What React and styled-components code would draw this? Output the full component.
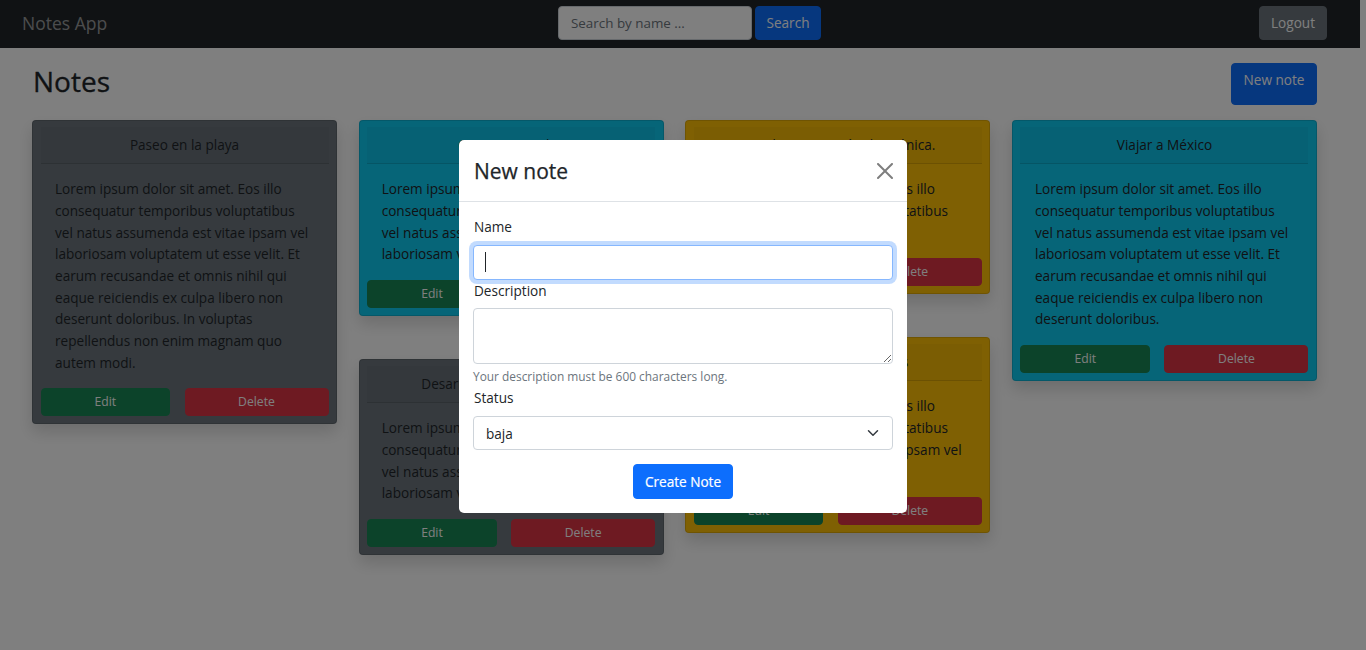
import React from 'react'
import styled, { createGlobalStyle } from 'styled-components'

const FONT = `"Open Sans", "Noto Sans", sans-serif`

const GlobalStyle = createGlobalStyle`
  html, body {
    margin: 0;
    height: 100%;
    overflow: hidden;
    background: #fff;
  }
  * { box-sizing: border-box; }
  body {
    font-family: ${FONT};
    font-size: 13.6px;
    color: #212529;
  }
`

const LOREM = [
  'Lorem ipsum dolor sit amet. Eos illo',
  'consequatur temporibus voluptatibus',
  'vel natus assumenda est vitae ipsam vel',
  'laboriosam voluptatem ut esse velit. Et',
  'earum recusandae et omnis nihil qui',
  'eaque reiciendis ex culpa libero non',
  'deserunt doloribus. In voluptas',
  'repellendus non enim magnam quo',
  'autem modi.',
]

const COLUMNS = [
  [{ title: 'Paseo en la playa', tone: 'secondary', lines: LOREM }],
  [
    { title: 'Comprar regalos', tone: 'info', lines: [...LOREM.slice(0, 3), 'laboriosam voluptatem ut esse velit.'] },
    { title: 'Desarrollar nueva aplicación', tone: 'secondary', lines: [...LOREM.slice(0, 3), 'laboriosam voluptatem ut esse velit.'] },
  ],
  [
    { title: 'Estudiar ingeniería electrónica.', tone: 'warning', lines: [...LOREM.slice(0, 2), 'vel natus assumenda'] },
    { title: 'Practicar matemáticas', tone: 'warning', lines: [...LOREM.slice(0, 3), 'laboriosam'] },
  ],
  [{ title: 'Viajar a México', tone: 'info', lines: [...LOREM.slice(0, 6), 'deserunt doloribus.'] }],
]

const TONES = {
  secondary: '#6c757d',
  info: '#0dcaf0',
  warning: '#ffc107',
}

const Page = styled.div`
  width: 1360px;
`

const Navbar = styled.nav`
  height: 48px;
  background: #212529;
  display: grid;
  grid-template-columns: 536px auto 1fr;
  align-items: center;
  padding: 0 33px 2px 22px;
`

const Brand = styled.a`
  font-size: 17.5px;
  color: rgba(255, 255, 255, 0.55);
`

const SearchForm = styled.form`
  display: flex;
  gap: 3px;
`

const SearchInput = styled.input`
  width: 194px;
  height: 34px;
  padding: 0 12px;
  border: 1px solid #ced4da;
  border-radius: 4px;
  background: #fff;
  font: 13.4px ${FONT};
  &::placeholder { color: #6c757d; opacity: 1; }
`

const Button = styled.button`
  font-family: ${FONT};
  font-size: 13.6px;
  line-height: 22px;
  color: #fff;
  border: 1px solid ${p => p.$bg};
  border-radius: 4px;
  background: ${p => p.$bg};
  padding: 5px 11px;
`

const SearchButton = styled(Button)`
  width: 66px;
  padding: 5px 0;
`

const LogoutWrap = styled.div`
  display: flex;
  justify-content: flex-end;
`

const Main = styled.main`
  padding: 15px 43px 0 32px;
`

const PageHead = styled.div`
  display: flex;
  justify-content: space-between;
  align-items: flex-start;
  margin-bottom: 15px;
`

const PageTitle = styled.h1`
  margin: 0 0 0 1px;
  font-size: 28px;
  font-weight: 500;
  line-height: 36px;
  -webkit-text-stroke: 0.3px #212529;
`

const NewNoteButton = styled(Button)`
  width: 86px;
  height: 42px;
  padding: 5px 0 13px;
`

const Columns = styled.div`
  display: grid;
  grid-template-columns: repeat(4, 305px);
  column-gap: 21.67px;
  align-items: start;
`

const Column = styled.div`
  display: flex;
  flex-direction: column;
  gap: 43.3px;
`

const Card = styled.article`
  background: ${p => TONES[p.$tone]};
  border: 1px solid rgba(0, 0, 0, 0.125);
  border-radius: 4px;
  box-shadow: 0 8px 16px rgba(0, 0, 0, 0.15);
  padding: 6px 7.5px 7px;
`

const CardHeader = styled.header`
  height: 37px;
  line-height: 36px;
  text-align: center;
  background: rgba(0, 0, 0, 0.03);
  border-bottom: 1px solid rgba(0, 0, 0, 0.125);
  white-space: nowrap;
`

const CardText = styled.div`
  padding: 14.2px 14.5px 14.8px;
`

const TextLine = styled.span`
  display: block;
  line-height: 21.67px;
  white-space: nowrap;
`

const CardActions = styled.div`
  display: grid;
  grid-template-columns: 45% 50%;
  justify-content: space-between;
`

const ActionButton = styled(Button)`
  height: 28px;
  padding: 0;
  font-size: 12.2px;
  line-height: 26px;
`

const Backdrop = styled.div`
  position: fixed;
  inset: 0;
  background: rgba(0, 0, 0, 0.5);
  display: flex;
  justify-content: center;
  align-items: flex-start;
  padding-top: 140px;
`

const Modal = styled.div`
  width: 448px;
  background: #fff;
  border-radius: 5px;
`

const ModalHeader = styled.div`
  height: 62px;
  display: flex;
  align-items: center;
  justify-content: space-between;
  padding: 0 14px 0 15px;
  border-bottom: 1px solid #dee2e6;
`

const ModalTitle = styled.h2`
  margin: 0;
  font-size: 21px;
  font-weight: 500;
  -webkit-text-stroke: 0.25px #212529;
`

const CloseButton = styled.button`
  width: 16px;
  height: 16px;
  padding: 0;
  border: 0;
  background: none;
  color: #000;
  opacity: 0.5;
  display: flex;
`

const ModalBody = styled.form`
  padding: 14px;
`

const Label = styled.label`
  display: block;
  line-height: 21.67px;
  margin: 0 0 7px 1px;
`

const FieldWrap = styled.div`
  position: relative;
`

const TextInput = styled.input`
  display: block;
  width: 100%;
  height: 35px;
  padding: 0 12px;
  border: 1px solid #86b7fe;
  border-radius: 4px;
  box-shadow: 0 0 0 4px rgba(13, 110, 253, 0.25);
  outline: 0;
  font: 13.6px ${FONT};
`

const Caret = styled.span`
  position: absolute;
  left: 12px;
  top: 7px;
  width: 1px;
  height: 20px;
  background: #212529;
`

const TextArea = styled.textarea`
  display: block;
  width: 100%;
  height: 56px;
  padding: 6px 12px;
  border: 1px solid #ced4da;
  border-radius: 4px;
  resize: vertical;
  font: 13.6px ${FONT};
`

const HelpText = styled.div`
  margin-top: 2px;
  height: 21px;
  line-height: 21px;
  font-size: 11.9px;
  color: #6c757d;
`

const Select = styled.select`
  display: block;
  width: 100%;
  height: 34px;
  padding: 0 12px;
  border: 1px solid #ced4da;
  border-radius: 4px;
  background: #fff;
  appearance: none;
  font: 13.6px ${FONT};
  color: #212529;
`

const Chevron = styled.svg`
  position: absolute;
  right: 12px;
  top: 11px;
  width: 16px;
  height: 12px;
  pointer-events: none;
`

const SubmitRow = styled.div`
  display: flex;
  justify-content: center;
  margin-top: 14px;
`

const SubmitButton = styled(Button)`
  width: 100px;
  height: 35px;
  padding: 0;
  font-weight: 500;
  -webkit-text-stroke: 0.2px #fff;
`

function NoteCard({ note }) {
  return (
    <Card $tone={note.tone}>
      <CardHeader>{note.title}</CardHeader>
      <CardText>
        {note.lines.map((line, i) => <TextLine key={i}>{line}</TextLine>)}
      </CardText>
      <CardActions>
        <ActionButton $bg="#198754">Edit</ActionButton>
        <ActionButton $bg="#dc3545">Delete</ActionButton>
      </CardActions>
    </Card>
  )
}

export default function App() {
  return (
    <>
      <GlobalStyle />
      <Page>
        <Navbar>
          <Brand>Notes App</Brand>
          <SearchForm>
            <SearchInput placeholder="Search by name ..." />
            <SearchButton $bg="#0d6efd" type="button">Search</SearchButton>
          </SearchForm>
          <LogoutWrap>
            <Button $bg="#6c757d" type="button">Logout</Button>
          </LogoutWrap>
        </Navbar>
        <Main>
          <PageHead>
            <PageTitle>Notes</PageTitle>
            <NewNoteButton $bg="#0d6efd" type="button">New note</NewNoteButton>
          </PageHead>
          <Columns>
            {COLUMNS.map((notes, i) => (
              <Column key={i}>
                {notes.map(note => <NoteCard key={note.title} note={note} />)}
              </Column>
            ))}
          </Columns>
        </Main>
      </Page>
      <Backdrop>
        <Modal>
          <ModalHeader>
            <ModalTitle>New note</ModalTitle>
            <CloseButton type="button" aria-label="Close">
              <svg viewBox="0 0 16 16" width="16" height="16" fill="currentColor">
                <path d="M.293.293a1 1 0 011.414 0L8 6.586 14.293.293a1 1 0 111.414 1.414L9.414 8l6.293 6.293a1 1 0 01-1.414 1.414L8 9.414l-6.293 6.293a1 1 0 01-1.414-1.414L6.586 8 .293 1.707a1 1 0 010-1.414z" />
              </svg>
            </CloseButton>
          </ModalHeader>
          <ModalBody>
            <Label>Name</Label>
            <FieldWrap>
              <TextInput />
              <Caret />
            </FieldWrap>
            <Label>Description</Label>
            <TextArea />
            <HelpText>Your description must be 600 characters long.</HelpText>
            <Label>Status</Label>
            <FieldWrap>
              <Select defaultValue="baja">
                <option value="baja">baja</option>
                <option value="media">media</option>
                <option value="alta">alta</option>
              </Select>
              <Chevron viewBox="0 0 16 16">
                <path fill="none" stroke="#343a40" strokeLinecap="round" strokeLinejoin="round" strokeWidth="2" d="M2 5l6 6 6-6" />
              </Chevron>
            </FieldWrap>
            <SubmitRow>
              <SubmitButton $bg="#0d6efd" type="button">Create Note</SubmitButton>
            </SubmitRow>
          </ModalBody>
        </Modal>
      </Backdrop>
    </>
  )
}
